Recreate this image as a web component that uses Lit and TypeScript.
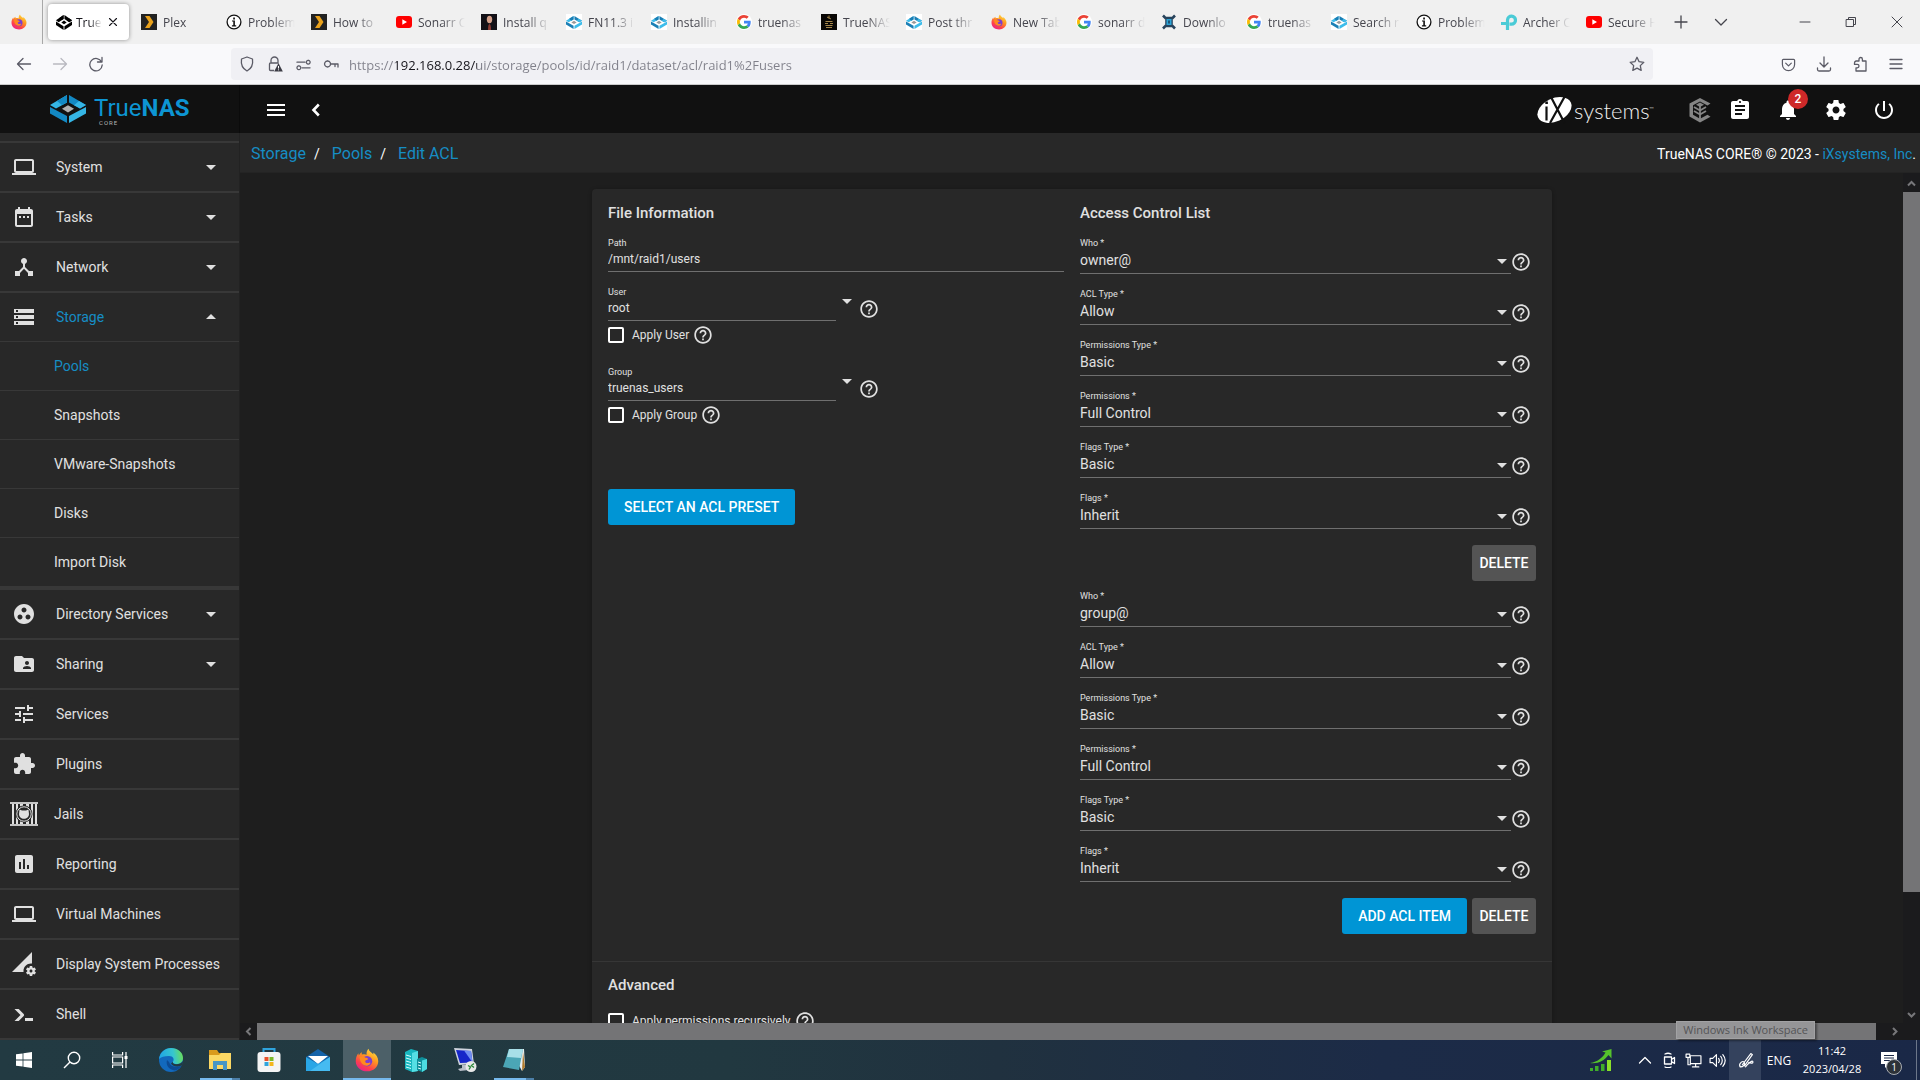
import { LitElement, html, svg, css, nothing, type TemplateResult } from "lit";
import { customElement } from "lit/decorators.js";
import { classMap } from "lit/directives/class-map.js";

type Art = TemplateResult;

const glyph = (d: string, size = 24, box = "0 0 24 24"): Art => html`<svg class="glyph" width=${size} height=${size} viewBox=${box} aria-hidden="true"><path fill="currentColor" fill-rule="evenodd" d=${d}></path></svg>`;
const line = (d: string, size = 16, weight = 1.3): Art => html`<svg class="glyph" width=${size} height=${size} viewBox="0 0 16 16" fill="none" stroke="currentColor" stroke-width=${weight} stroke-linecap="round" stroke-linejoin="round" aria-hidden="true"><path d=${d}></path></svg>`;

const P = {
  computer: "M20 18c1.1 0 1.99-.9 1.99-2L22 6c0-1.1-.9-2-2-2H4c-1.1 0-2 .9-2 2v10c0 1.1.9 2 2 2H0v2h24v-2h-4zM4 6h16v10H4V6z",
  calendar: "M9 11H7v2h2v-2zm4 0h-2v2h2v-2zm4 0h-2v2h2v-2zm2-7h-1V2h-2v2H8V2H6v2H5c-1.11 0-1.99.9-1.99 2L3 20c0 1.1.89 2 2 2h14c1.1 0 2-.9 2-2V6c0-1.1-.9-2-2-2zm0 16H5V9h14v11z",
  hub: "M17 16l-4-4V8.82C14.16 8.4 15 7.3 15 6c0-1.66-1.34-3-3-3S9 4.34 9 6c0 1.3.84 2.4 2 2.82V12l-4 4H3v5h5v-3.05l4-4.2 4 4.2V21h5v-5h-4z",
  storage: "M2 20h20v-4H2v4zm2-3h2v2H4v-2zM2 4v4h20V4H2zm4 3H4V5h2v2zm-4 7h20v-4H2v4zm2-3h2v2H4v-2z",
  groupWork: "M12 2C6.48 2 2 6.48 2 12s4.48 10 10 10 10-4.48 10-10S17.52 2 12 2zM8 17.5c-1.38 0-2.5-1.12-2.5-2.5s1.12-2.5 2.5-2.5 2.5 1.12 2.5 2.5-1.12 2.5-2.5 2.5zM9.5 8c0-1.38 1.12-2.5 2.5-2.5s2.5 1.12 2.5 2.5-1.12 2.5-2.5 2.5S9.5 9.38 9.5 8zm6.5 9.5c-1.38 0-2.5-1.12-2.5-2.5s1.12-2.5 2.5-2.5 2.5 1.12 2.5 2.5-1.12 2.5-2.5 2.5z",
  folderShared: "M20 6h-8l-2-2H4c-1.1 0-1.99.9-1.99 2L2 18c0 1.1.9 2 2 2h16c1.1 0 2-.9 2-2V8c0-1.1-.9-2-2-2zm-5 3c1.1 0 2 .9 2 2s-.9 2-2 2-2-.9-2-2 .9-2 2-2zm4 8h-8v-1c0-1.33 2.67-2 4-2s4 .67 4 2v1z",
  tune: "M3 17v2h6v-2H3zM3 5v2h10V5H3zm10 16v-2h8v-2h-8v-2h-2v6h2zM7 9v2H3v2h4v2h2V9H7zm14 4v-2H11v2h10zm-6-4h2V7h4V5h-4V3h-2v6z",
  plugin: "M20.5 11H19V7c0-1.1-.9-2-2-2h-4V3.5C13 2.12 11.88 1 10.5 1S8 2.12 8 3.5V5H4c-1.1 0-1.99.9-1.99 2v3.8H3.5c1.49 0 2.7 1.21 2.7 2.7s-1.21 2.7-2.7 2.7H2V20c0 1.1.9 2 2 2h3.8v-1.5c0-1.49 1.21-2.7 2.7-2.7 1.49 0 2.7 1.21 2.7 2.7V22H17c1.1 0 2-.9 2-2v-4h1.5c1.38 0 2.5-1.12 2.5-2.5S21.88 11 20.5 11z",
  report: "M19 3H5c-1.1 0-2 .9-2 2v14c0 1.1.9 2 2 2h14c1.1 0 2-.9 2-2V5c0-1.1-.9-2-2-2zM9 17H7v-7h2v7zm4 0h-2V7h2v10zm4 0h-2v-4h2v4z",
  process: "M18.99 11.5c.34 0 .67.03 1 .07L20 0 0 20h11.56c-.04-.33-.07-.66-.07-1 0-4.14 3.36-7.5 7.5-7.5zm3.71 7.99c.02-.16.04-.32.04-.49 0-.17-.01-.33-.04-.49l1.06-.83c.09-.08.12-.21.06-.32l-1-1.73c-.06-.11-.19-.15-.31-.11l-1.24.5c-.26-.2-.54-.37-.85-.49l-.19-1.32c-.01-.12-.12-.21-.24-.21h-2c-.12 0-.23.09-.25.21l-.19 1.32c-.3.13-.59.29-.85.49l-1.24-.5c-.11-.04-.24 0-.31.11l-1 1.73c-.06.11-.04.24.06.32l1.06.83c-.02.16-.03.32-.03.49 0 .17.01.33.03.49l-1.06.83c-.09.08-.12.21-.06.32l1 1.73c.06.11.19.15.31.11l1.24-.5c.26.2.54.37.85.49l.19 1.32c.02.12.12.21.25.21h2c.12 0 .23-.09.25-.21l.19-1.32c.3-.13.59-.29.84-.49l1.25.5c.11.04.24 0 .31-.11l1-1.73c.06-.11.03-.24-.06-.32l-1.07-.83zm-3.71 1.01c-.83 0-1.5-.67-1.5-1.5s.67-1.5 1.5-1.5 1.5.67 1.5 1.5-.67 1.5-1.5 1.5z",
  shell: "M13 19v-3h8v3h-8M8.500 13 2.470 7h4.240l4.960 4.950c.58.59.58 1.550 0 2.120L6.740 19H2.500l6-6z",
  help: "M11 18h2v-2h-2v2zm1-16C6.48 2 2 6.48 2 12s4.48 10 10 10 10-4.48 10-10S17.52 2 12 2zm0 18c-4.41 0-8-3.59-8-8s3.59-8 8-8 8 3.59 8 8-3.59 8-8 8zm0-14c-2.21 0-4 1.79-4 4h2c0-1.1.9-2 2-2s2 .9 2 2c0 2-3 1.75-3 5h2c0-2.25 3-2.5 3-5 0-2.21-1.79-4-4-4z",
  menu: "M3 18h18v-2H3v2zm0-5h18v-2H3v2zm0-7v2h18V6H3z",
  clipboard: "M19 3h-4.18C14.4 1.84 13.3 1 12 1c-1.3 0-2.4.84-2.82 2H5c-1.1 0-2 .9-2 2v14c0 1.1.9 2 2 2h14c1.1 0 2-.9 2-2V5c0-1.1-.9-2-2-2zm-7 0c.55 0 1 .45 1 1s-.45 1-1 1-1-.45-1-1 .45-1 1-1zm2 14H7v-2h7v2zm3-4H7v-2h10v2zm0-4H7V7h10v2z",
  bell: "M12 22c1.1 0 2-.9 2-2h-4c0 1.1.89 2 2 2zm6-6v-5c0-3.07-1.64-5.64-4.5-6.32V4c0-.83-.67-1.5-1.5-1.5s-1.5.67-1.5 1.5v.68C7.63 5.36 6 7.92 6 11v5l-2 2v1h16v-1l-2-2z",
  gear: "M19.43 12.98c.04-.32.07-.64.07-.98s-.03-.66-.07-.98l2.11-1.65c.19-.15.24-.42.12-.64l-2-3.46c-.12-.22-.39-.3-.61-.22l-2.49 1c-.52-.4-1.08-.73-1.69-.98l-.38-2.65C14.46 2.18 14.25 2 14 2h-4c-.25 0-.46.18-.49.42l-.38 2.65c-.61.25-1.17.59-1.69.98l-2.49-1c-.23-.09-.49 0-.61.22l-2 3.46c-.13.22-.07.49.12.64l2.11 1.65c-.04.32-.07.65-.07.98s.03.66.07.98l-2.11 1.65c-.19.15-.24.42-.12.64l2 3.46c.12.22.39.3.61.22l2.49-1c.52.4 1.08.73 1.69.98l.38 2.65c.03.24.24.42.49.42h4c.25 0 .46-.18.49-.42l.38-2.65c.61-.25 1.17-.59 1.69-.98l2.49 1c.23.09.49 0 .61-.22l2-3.46c.12-.22.07-.49-.12-.64l-2.11-1.65zM12 15.5c-1.93 0-3.5-1.57-3.5-3.5s1.57-3.5 3.5-3.5 3.5 1.57 3.5 3.5-1.57 3.5-3.5 3.5z",
  power: "M13 3h-2v10h2V3zm4.83 2.17l-1.42 1.42C17.99 7.86 19 9.81 19 12c0 3.87-3.13 7-7 7s-7-3.13-7-7c0-2.19 1.01-4.14 2.58-5.42L6.17 5.17C4.23 6.82 3 9.26 3 12c0 4.97 4.03 9 9 9s9-4.03 9-9c0-2.74-1.23-5.18-3.17-6.83z",
  down: "M7 10l5 5 5-5z",
  up: "M7 14l5-5 5 5z",
};

const jail = html`<svg class="glyph" width="28" height="24" viewBox="0 0 28 24" aria-hidden="true">
  <g fill="currentColor"><path d="M0 0h28v2H0zM0 22h28v2H0z" opacity=".85"></path><path d="M2 2h2v20H2zM6 2h2v20H6zM10 2h3v20h-3zM16 2h3v20h-3zM21 2h2v20h-2zM25 2h2v20h-2z"></path></g>
  <circle cx="14" cy="12" r="8.500" fill="#282828"></circle><circle cx="14" cy="12" r="7.200" fill="none" stroke="currentColor" stroke-width="1"></circle>
  <path fill="currentColor" d="M9.500 7.500l2.500 1h4l2.500-1 .5 4.500c0 2.900-2.200 4.800-5 4.800s-5-1.900-5-4.800z"></path>
</svg>`;

const nasMark = (w: number, h: number, light: string, dark: string, core: string): Art => html`<svg class="glyph" width=${w} height=${h} viewBox="0 0 36 28" preserveAspectRatio="none" aria-hidden="true">
  <path fill=${light} d="M17 0v7.500L6 13.500 0 10z"></path><path fill=${dark} d="M17 0v7.500L12 10 7 6z"></path>
  <path fill=${dark} d="M19 0l17 10-6 3.500-11-6z"></path><path fill=${light} d="M29 6l7 4-6 3.500-6-3.300z"></path>
  <path fill=${dark} d="M0 12l17 9v7L0 18.500z"></path><path fill=${light} d="M36 12l-17 9v7l17-9.500z"></path>
  <path fill=${core} d="M18 10.200l6 3.600-6 3.600-6-3.600z"></path>
</svg>`;

const firefox = (s: number): Art => html`<svg class="glyph" width=${s} height=${s} viewBox="0 0 32 32" aria-hidden="true">
  <defs><linearGradient id="fx" x1=".85" y1="0" x2=".25" y2="1"><stop offset="0" stop-color="#ffe94a"></stop><stop offset=".4" stop-color="#ff9a1f"></stop><stop offset=".75" stop-color="#ff3f4c"></stop><stop offset="1" stop-color="#e5208f"></stop></linearGradient></defs>
  <path fill="url(#fx)" d="M18 1c.5 3.500 4 4.500 6.500 7.500 0-1 0-1.500-.5-2.500C28 8.500 31 12.500 31 17.500 31 25 24.500 31 16.200 31 8 31 1 25.500 1 17.500 1 13.500 2 10 4.500 7l.5 3c1.500-2.500 2.500-3.500 4-4.500v3c3-.5 5-.5 6.500.5-.5-3 .5-6 2.500-8z"></path>
  <circle cx="16" cy="17.500" r="7" fill="#7b3fd0"></circle>
  <path fill="#ff8a1f" d="M6 12c4-2 6-.5 8 1 2 0 3 .5 3.500 1.500-1 1.500-3.500 1.200-4 3 .3 2.500 3 3.200 5.500 2 1-.4 2 .4 1.200 1.400-2 2.600-5 3.400-8 2.100C8.500 21.500 6.500 17 6 12z"></path>
</svg>`;
const plex = html`<svg class="glyph" width="16" height="16" viewBox="0 0 16 16" aria-hidden="true"><path fill="#222" d="M0 0h16v16H0z"></path><path fill="#e9a11b" d="M4 2h4.500l4 6-4 6H4l4-6z"></path></svg>`;
const info = html`<svg class="glyph" width="16" height="16" viewBox="0 0 16 16" aria-hidden="true"><circle cx="8" cy="8" r="6.900" fill="#fff" stroke="#111" stroke-width="1.300"></circle><path fill="#111" d="M7.200 3.600h1.700v1.800H7.200zM6 6.500h2.900v4.800h1.300v1.100H5.900v-1.100h1.400V7.600H6z"></path></svg>`;
const youtube = html`<svg class="glyph" width="16" height="16" viewBox="0 0 16 16" aria-hidden="true"><rect y="2" width="16" height="12" rx="3" fill="#f00"></rect><path fill="#fff" d="M6.300 5.200v5.600L11 8z"></path></svg>`;
const person = html`<svg class="glyph" width="16" height="16" viewBox="0 0 16 16" aria-hidden="true"><path fill="#121016" d="M0 0h16v16H0z"></path><ellipse cx="8.500" cy="5.500" rx="2.700" ry="3.700" fill="#d3a08a"></ellipse><path fill="#8c3b34" d="M7 16c0-4 .5-6 1.500-6s1.500 2 1.500 6z"></path></svg>`;
const google = html`<svg class="glyph" width="16" height="16" viewBox="0 0 48 48" aria-hidden="true"><circle cx="24" cy="24" r="24" fill="#fff"></circle><g transform="translate(3 3) scale(.875)"><path fill="#EA4335" d="M24 9.500c3.540 0 6.710 1.220 9.210 3.600l6.850-6.850C35.900 2.380 30.470 0 24 0 14.620 0 6.510 5.380 2.560 13.220l7.980 6.190C12.430 13.720 17.740 9.500 24 9.500z"></path><path fill="#4285F4" d="M46.980 24.550c0-1.570-.15-3.090-.38-4.550H24v9.020h12.940c-.58 2.960-2.260 5.480-4.780 7.180l7.730 6c4.510-4.180 7.090-10.360 7.090-17.650z"></path><path fill="#FBBC05" d="M10.530 28.590c-.48-1.450-.76-2.990-.76-4.590s.27-3.140.76-4.590l-7.980-6.190C.92 16.460 0 20.120 0 24s.92 7.540 2.560 10.780z"></path><path fill="#34A853" d="M24 48c6.480 0 11.930-2.130 15.890-5.810l-7.730-6c-2.150 1.450-4.920 2.300-8.160 2.300-6.260 0-11.570-4.220-13.470-9.910l-7.980 6.190C6.510 42.620 14.620 48 24 48z"></path></g></svg>`;
const stamp = html`<svg class="glyph" width="16" height="16" viewBox="0 0 16 16" aria-hidden="true"><path fill="#080604" d="M0 0h16v16H0z"></path><path stroke="#a5864a" fill="none" d="M8 1.500v3M6 3l4 2M4.500 7.500h7M4 9.500h3M9 9.500h3M4.500 11.500h7M5 13.500h6"></path></svg>`;
const downloadSite = html`<svg class="glyph" width="16" height="16" viewBox="0 0 16 16" aria-hidden="true"><path fill="none" stroke="#27435c" stroke-width="2.600" d="M2 1.500L5.500 5v6L2 14.500M14 1.500L10.500 5v6l3.500 3.500M5 4h6M5 12h6"></path><path fill="#2aa3d6" d="M5.500 5h5v6h-5z"></path><path fill="#173049" d="M7.300 6.500h1.400v3H7.300z"></path></svg>`;
const tplink = html`<svg class="glyph" width="16" height="16" viewBox="0 0 16 16" aria-hidden="true"><path fill="none" stroke="#4acbd6" stroke-width="3.200" d="M0 9.500h5.500M6.500 16V6a4 4 0 1 1 4 4.200H8.500"></path></svg>`;
const blueMark = html`<span class="mark-tile">${nasMark(16, 13, "#3dbcea", "#1b7fb5", "#9a9a9a")}</span>`;
const blackMark = nasMark(16, 15, "#000", "#000", "#000");

const TABS: { art: Art; text: string; active?: boolean }[] = [
  { art: blackMark, text: "TrueN", active: true },
  { art: plex, text: "Plex" },
  { art: info, text: "Problem" },
  { art: plex, text: "How to" },
  { art: youtube, text: "Sonarr C" },
  { art: person, text: "Install q" },
  { art: blueMark, text: "FN11.3 i" },
  { art: blueMark, text: "Installin" },
  { art: google, text: "truenas" },
  { art: stamp, text: "TrueNAS" },
  { art: blueMark, text: "Post thr" },
  { art: firefox(16), text: "New Tab" },
  { art: google, text: "sonarr d" },
  { art: downloadSite, text: "Downlo" },
  { art: google, text: "truenas" },
  { art: blueMark, text: "Search r" },
  { art: info, text: "Problem" },
  { art: tplink, text: "Archer C" },
  { art: youtube, text: "Secure H" },
];

interface NavItem { text: string; art: Art; expand?: boolean; open?: boolean; tight?: boolean; children?: string[] }
const NAV: NavItem[] = [
  { text: "System", art: glyph(P.computer), expand: true },
  { text: "Tasks", art: glyph(P.calendar), expand: true },
  { text: "Network", art: glyph(P.hub), expand: true },
  { text: "Storage", art: glyph(P.storage), expand: true, open: true, children: ["Pools", "Snapshots", "VMware-Snapshots", "Disks", "Import Disk"] },
  { text: "Directory Services", art: glyph(P.groupWork), expand: true },
  { text: "Sharing", art: glyph(P.folderShared), expand: true },
  { text: "Services", art: glyph(P.tune) },
  { text: "Plugins", art: glyph(P.plugin) },
  { text: "Jails", art: jail, tight: true },
  { text: "Reporting", art: glyph(P.report) },
  { text: "Virtual Machines", art: glyph(P.computer) },
  { text: "Display System Processes", art: glyph(P.process) },
  { text: "Shell", art: glyph(P.shell) },
];

const ACL_ITEMS: [string, string][][] = ["owner@", "group@"].map((who) => [
  ["Who", who], ["ACL Type", "Allow"], ["Permissions Type", "Basic"],
  ["Permissions", "Full Control"], ["Flags Type", "Basic"], ["Flags", "Inherit"],
]);

const base = css`
  :host { box-sizing: border-box; }
  *, *::before, *::after { box-sizing: border-box; }
  button { font: inherit; color: inherit; background: none; border: 0; padding: 0; display: flex; align-items: center; justify-content: center; cursor: pointer; }
  a { color: inherit; text-decoration: none; }
  ul { list-style: none; margin: 0; padding: 0; }
  .glyph { display: block; flex: none; }
`;

@customElement("browser-chrome")
class BrowserChrome extends LitElement {
  static styles = [base, css`
    :host { display: block; font-family: "Open Sans", "Noto Sans", sans-serif; font-size: 12px; color: #45454d; border-bottom: 1px solid #cccccc; }
    .tabs { display: flex; align-items: center; height: 44px; background: #f0f0f0; }
    .pinned { width: 43px; height: 44px; padding-right: 4px; border-right: 1px solid #a8a8a8; margin-right: 3px; }
    .tab { flex: 0 1 85px; min-width: 0; height: 44px; padding: 4px 2px; }
    .face { width: 100%; height: 36px; padding: 0 4px 0 8px; gap: 6px; border-radius: 4px; justify-content: flex-start; display: flex; align-items: center; }
    .active .face { background: #fff; box-shadow: 0 0 4px rgba(0, 0, 0, 0.4); color: #15141a; gap: 4px; padding-right: 9px; }
    .caption { flex: 1; min-width: 0; text-align: left; overflow: hidden; white-space: nowrap; -webkit-mask-image: linear-gradient(90deg, #000 50%, transparent); mask-image: linear-gradient(90deg, #000 50%, transparent); }
    .mark-tile { display: flex; align-items: center; width: 16px; height: 16px; background: #fff; flex: none; }
    .extra { width: 40px; height: 36px; }
    .spacer { flex: 1; }
    .win { width: 46px; height: 44px; }
    .bar { display: flex; align-items: center; height: 40px; padding: 0 6px; background: #f9f9fb; color: #5b5b66; }
    .tool { width: 36px; height: 32px; }
    .dim { color: #b9b9c0; }
    .url { flex: 1; display: flex; align-items: center; height: 32px; margin: 0 117px; padding: 0 8px 0 2px; border-radius: 4px; background: #f0f0f4; }
    .url button { width: 28px; height: 28px; }
    .url .star { width: 16px; }
    .address { flex: 1; min-width: 0; height: 30px; border: 0; outline: 0; padding: 2px 0 0 4px; font: inherit; font-size: 13px; color: transparent; background: linear-gradient(90deg, #80808a 51px, #15141a 51px, #15141a 132px, #80808a 132px); background-clip: text; -webkit-background-clip: text; }
  `];
  render() {
    return html`
      <div class="tabs">
        <button class="pinned" aria-label="Firefox View">${firefox(16)}</button>
        ${TABS.map((t) => html`<div class=${classMap({ tab: true, active: !!t.active })}><button class="face">
          ${t.art}<span class="caption">${t.text}</span>${t.active ? line("M4 4l8 8M12 4l-8 8", 14) : nothing}</button></div>`)}
        <button class="extra" aria-label="New tab">${line("M8 2v12M2 8h12")}</button>
        <button class="extra" aria-label="List tabs">${line("M2.500 5.500L8 11l5.500-5.500")}</button>
        <span class="spacer"></span>
        <button class="win" aria-label="Minimise">${line("M3 8h10", 16, 1)}</button>
        <button class="win" aria-label="Restore">${line("M3.500 5.500h7v7h-7zM5.500 5.500v-2h7v7h-2", 16, 1)}</button>
        <button class="win" aria-label="Close">${line("M3 3l10 10M13 3L3 13", 16, 1)}</button>
      </div>
      <div class="bar">
        <button class="tool" aria-label="Back">${line("M14.500 8H2M7 2.500L1.500 8 7 13.500")}</button>
        <button class="tool dim" aria-label="Forward">${line("M1.500 8H14M9 2.500L14.500 8 9 13.500")}</button>
        <button class="tool" aria-label="Reload">${line("M13.600 6A6.200 6.200 0 1 0 14.200 9M14 1.500V6H9.500")}</button>
        <div class="url">
          <button aria-label="Tracking protection">${line("M8 1l5.500 2c.7 5-.8 9.500-5.500 12C3.300 12.500 1.800 8 2.500 3z")}</button>
          <button aria-label="Connection not secure"><svg class="glyph" width="16" height="16" viewBox="0 0 16 16" aria-hidden="true"><path fill="none" stroke="currentColor" stroke-width="1.300" d="M4 7V4.500a3.500 3.500 0 0 1 7 0V7M7 14.500H3.500a1 1 0 0 1-1-1v-5.500a1 1 0 0 1 1-1h8"></path><path fill="#3c3c45" d="M11.500 7l4.300 8.500H7.200z"></path><path stroke="#fff" d="M11.500 10v2.500M11.500 13.400v.9"></path></svg></button>
          <button aria-label="Permissions">${line("M1 5.500h8.500M13 3.500a2 2 0 1 0 .1 0M6.500 11.500H15M3 9.500a2 2 0 1 0 .1 0", 15)}</button>
          <button aria-label="Saved login">${line("M4.500 5a3 3 0 1 0 .1 0M7.500 8H15v3M12 8v2.500")}</button>
          <input class="address" aria-label="Address" value="https://192.168.0.28/ui/storage/pools/id/raid1/dataset/acl/raid1%2Fusers">
          <button class="star" aria-label="Bookmark">${line("M8 1.300l2.100 4.400 4.700.6-3.500 3.300.9 4.800L8 12.100l-4.200 2.300.9-4.800L1.200 6.300l4.700-.6z")}</button>
        </div>
        <button class="tool" aria-label="Pocket">${line("M2.500 2.500h11a1 1 0 0 1 1 1V8a6.500 6.500 0 0 1-13 0V3.500a1 1 0 0 1 1-1zM5 6.500l3 3 3-3", 15)}</button>
        <button class="tool" aria-label="Downloads">${line("M8 1v9.500M4 7l4 4 4-4M1.500 12v1.500a1.500 1.500 0 0 0 1.500 1.500h10a1.500 1.500 0 0 0 1.500-1.500V12")}</button>
        <button class="tool" aria-label="Extensions">${line("M4 5h3V3.200a1.700 1.700 0 0 1 3.400 0V5H14v10H4v-3.200h1.300a1.700 1.700 0 0 0 0-3.400H2.500V7A2 2 0 0 1 4 5z")}</button>
        <button class="tool" aria-label="Application menu">${line("M2 3.500h12M2 8h12M2 12.500h12")}</button>
      </div>`;
  }
}

@customElement("nas-header")
class NasHeader extends LitElement {
  static styles = [base, css`
    :host { display: flex; height: 48px; background: #111111; color: #fff; font-family: Roboto, sans-serif; }
    .brand { display: flex; align-items: center; gap: 8px; width: 240px; padding-left: 50px; border-right: 1px solid #0b0b0b; }
    .name { display: flex; flex-direction: column; color: #0d95d3; font-size: 24px; line-height: 24px; padding-top: 4px; }
    .name b { font-weight: 700; }
    .name small { font-size: 6px; line-height: 8px; color: #b5b5b5; padding-left: 5px; letter-spacing: 1px; margin-top: -1px; }
    .left { display: flex; align-items: center; padding: 2px 0 0 16px; }
    .left button { width: 40px; height: 40px; }
    .right { display: flex; align-items: center; margin-left: auto; padding: 2px 12px 0 0; }
    .ix { display: flex; align-items: center; gap: 2px; font-family: Lato, sans-serif; font-weight: 300; font-size: 22px; color: #eee; margin-right: 30px; }
    .ix sup { font-size: 6px; }
    .right button { width: 48px; height: 46px; position: relative; }
    .right .command { width: 32px; }
    .badge { position: absolute; top: 2px; left: 24px; width: 20px; height: 20px; border-radius: 50%; background: #ce2929; font-size: 12px; font-weight: 500; line-height: 20px; text-align: center; }
  `];
  render() {
    return html`
      <a class="brand" href="#dashboard">${nasMark(36, 28, "#35b6e6", "#1389c4", "#b0b0b0")}<span class="name"><span>True<b>NAS</b></span><small>CORE</small></span></a>
      <div class="left">
        <button aria-label="Toggle menu">${glyph(P.menu)}</button>
        <button aria-label="Collapse menu"><svg class="glyph" width="24" height="24" viewBox="0 0 24 24" aria-hidden="true"><path fill="none" stroke="#fff" stroke-width="2.600" d="M14.800 6.500L9.500 12l5.300 5.500"></path></svg></button>
      </div>
      <div class="right">
        <a class="ix" href="#ixsystems"><svg class="glyph" width="35" height="28" viewBox="0 0 35 28" role="img" aria-label="iX">
          <ellipse cx="17.500" cy="14" rx="18" ry="11.500" transform="rotate(-25 17.500 14)" fill="#fff"></ellipse>
          <path stroke="#111" stroke-width="2.200" fill="none" d="M9.500 10.500v14M14 1l13.500 26M28 0L13 27"></path><path fill="#111" d="M8.300 5.500h2.600V8H8.300z"></path></svg>
          <span>systems<sup>™</sup></span></a>
        <button class="command" aria-label="TrueCommand"><svg class="glyph" width="24" height="26" viewBox="0 0 24 26" aria-hidden="true">
          <path fill="#858585" d="M12 1l10.500 5.500-3 2L12 4.500 5 8.200v9.600l7 4 7.500-4 3 2L12 25.500 1.500 19.500v-13z"></path>
          <path fill="none" stroke="#858585" stroke-width="1.800" d="M12 8v14M6 10l6 3.500L18 10M6 14l6 3.500 6-3.500"></path><path fill="#858585" d="M12 5.500l4 2.300-4 2.300-4-2.300z"></path></svg></button>
        <button aria-label="Task manager">${glyph(P.clipboard)}</button>
        <button aria-label="Alerts">${glyph(P.bell)}<span class="badge">2</span></button>
        <button aria-label="Settings">${glyph(P.gear)}</button>
        <button aria-label="Power">${glyph(P.power)}</button>
      </div>`;
  }
}

@customElement("nas-sidebar")
class NasSidebar extends LitElement {
  static styles = [base, css`
    :host { display: block; width: 240px; flex: none; background: #282828; color: #e0e0e0; font-family: Roboto, sans-serif; font-size: 14px; padding-top: 8px; overflow: hidden; border-right: 1px solid #222222; }
    .list { border-top: 2px solid #383838; }
    .item { border-bottom: 2px solid #383838; }
    .row { display: flex; align-items: center; height: 48px; padding: 0 16px 0 12px; gap: 20px; }
    .tight { padding-left: 10px; gap: 16px; }
    .row .text { flex: 1; white-space: nowrap; }
    .open .row .text, .here { color: #168dc4; }
    .sub { border-bottom: 2px solid #383838; }
    .sub a { display: flex; align-items: center; height: 49px; padding-left: 54px; border-top: 1px solid #383838; }
  `];
  render() {
    return html`<nav><ul class="list">${NAV.map((n) => html`<li class=${classMap({ item: true, open: !!n.open })}>
      <a href="#nav" class=${classMap({ row: true, tight: !!n.tight })}>${n.art}<span class="text">${n.text}</span>${n.expand ? glyph(n.open ? P.up : P.down) : nothing}</a>
      ${n.children ? html`<ul class="sub">${n.children.map((c, i) => html`<li><a href="#nav" class=${classMap({ here: i === 0 })}>${c}</a></li>`)}</ul>` : nothing}
    </li>`)}</ul></nav>`;
  }
}

@customElement("acl-form")
class AclForm extends LitElement {
  static styles = [base, css`
    :host { display: block; max-width: 960px; margin: 0 auto; background: #282828; color: #e0e0e0; border-radius: 4px; box-shadow: 0 1px 4px rgba(0, 0, 0, 0.3); font-family: Roboto, sans-serif; }
    .columns { display: grid; grid-template-columns: 1fr 1fr; padding-bottom: 27px; border-bottom: 1px solid #363636; }
    .section { padding: 12px 8px 0 16px; }
    .section + .section { padding: 12px 16px 0 8px; }
    h2 { margin: 0 0 12px; font-size: 15px; line-height: 24px; font-weight: 500; }
    .section + .section { padding-right: 16px; }
    .field { display: flex; align-items: flex-end; margin-bottom: 14px; }
    .control { flex: 1; min-width: 0; display: flex; flex-direction: column; border-bottom: 1px solid #6f6f6f; position: relative; }
    label.small { font-size: 9px; line-height: 12px; }
    .control input, .control select { width: 100%; border: 0; outline: 0; margin: 0; padding: 0 0 2px; background: none; color: inherit; font-family: inherit; appearance: none; border-radius: 0; }
    .control input { height: 22px; font-size: 12px; padding-bottom: 3px; }
    .control select { height: 24px; font-size: 14px; }
    .control .glyph { position: absolute; right: -3px; bottom: 0; pointer-events: none; }
    .help { width: 20px; height: 20px; margin-bottom: 2px; flex: none; }
    .acl .field { padding-right: 5px; }
    .combo { margin-bottom: 4px; }
    .combo .control { flex: 0 0 50%; }
    .drop { width: 22px; height: 30px; margin-right: 1px; align-self: flex-start; }
    .check { display: flex; align-items: center; height: 20px; font-size: 12px; gap: 8px; }
    .check input { appearance: none; width: 16px; height: 16px; margin: 0; border: 2px solid #fff; border-radius: 2px; }
    .check label { margin-right: -4px; }
    .check .help { margin: 0; }
    .check + .combo { margin-top: 21px; }
    .solid { height: 36px; padding: 0 16px; border-radius: 3px; font-size: 14px; font-weight: 500; background: #0095d5; color: #fff; white-space: nowrap; }
    .gray { width: 64px; padding: 0; background: #545454; }
    .preset { margin-top: 64px; }
    .actions { display: flex; justify-content: flex-end; gap: 5px; padding-top: 2px; margin-bottom: 9px; }
    .acl:last-child .actions { margin-bottom: 0; }
    .advanced { padding: 11px 16px 200px; }
    .advanced h2 { margin-bottom: 14px; }
  `];
  private help() {
    return html`<button class="help" type="button" aria-label="Help">${glyph(P.help, 20, "0.5 0.5 23 23")}</button>`;
  }
  private check(id: string, text: string) {
    return html`<div class="check"><input type="checkbox" id=${id}><label for=${id}>${text}</label>${this.help()}</div>`;
  }
  private combo(id: string, text: string, value: string) {
    return html`<div class="field combo"><div class="control"><label class="small" for=${id}>${text}</label><input id=${id} .value=${value}></div>
      <button class="drop" type="button" aria-label=${`Show ${text} options`}>${glyph(P.down)}</button>${this.help()}</div>`;
  }
  render() {
    return html`<form>
      <div class="columns">
        <section class="section">
          <h2>File Information</h2>
          <div class="field"><div class="control"><label class="small" for="path">Path</label><input id="path" .value=${"/mnt/raid1/users"}></div></div>
          ${this.combo("user", "User", "root")}
          ${this.check("apply-user", "Apply User")}
          ${this.combo("group", "Group", "truenas_users")}
          ${this.check("apply-group", "Apply Group")}
          <button class="solid preset" type="button">SELECT AN ACL PRESET</button>
        </section>
        <section class="section">
          <h2>Access Control List</h2>
          ${ACL_ITEMS.map((fields, g) => html`<div class="acl">
            ${fields.map(([name, value], i) => html`<div class="field"><div class="control"><label class="small" for=${`f${g}-${i}`}>${name} *</label>
              <select id=${`f${g}-${i}`}><option>${value}</option></select>${glyph(P.down)}</div>${this.help()}</div>`)}
            <div class="actions">${g === ACL_ITEMS.length - 1 ? html`<button class="solid" type="button">ADD ACL ITEM</button>` : nothing}<button class="solid gray" type="button">DELETE</button></div>
          </div>`)}
        </section>
      </div>
      <section class="advanced"><h2>Advanced</h2>${this.check("recursive", "Apply permissions recursively")}</section>
    </form>`;
  }
}

const ICON = {
  windows: html`<svg class="glyph" width="16" height="16" viewBox="0 0 16 16" aria-hidden="true"><path fill="#fff" d="M0 2.300l6.600-.9v6.200H0zM7.400 1.300L16 0v7.600H7.400zM0 8.400h6.600v6.200L0 13.700zM7.400 8.400H16V16l-8.600-1.300z"></path></svg>`,
  search: html`<svg class="glyph" width="18" height="18" viewBox="0 0 18 18" aria-hidden="true"><circle cx="11" cy="7" r="5.700" fill="none" stroke="#fff" stroke-width="1.400"></circle><path stroke="#fff" stroke-width="1.400" d="M7 11l-6 6"></path></svg>`,
  view: html`<svg class="glyph" width="16" height="16" viewBox="0 0 16 16" aria-hidden="true"><path fill="none" stroke="#fff" stroke-width="1.200" d="M.6 0v3h10V0M.6 16v-3h10v3M.6 5h10v6H.6zM14 0v16"></path><path fill="#fff" d="M12.500 4h3v3h-3z"></path></svg>`,
  edge: html`<svg class="glyph" width="24" height="24" viewBox="0 0 24 24" aria-hidden="true"><defs><linearGradient id="eg" x1="0" y1=".5" x2="1" y2=".4"><stop offset="0" stop-color="#1fa5e6"></stop><stop offset=".6" stop-color="#36c6cf"></stop><stop offset="1" stop-color="#6ade58"></stop></linearGradient></defs>
    <circle cx="12" cy="12" r="12" fill="#1269bd"></circle><path fill="url(#eg)" d="M0 11C1 4 6 0 12 0c7 0 12 4.500 12 10 0 4-3 6-6.500 6-3 0-4.500-1-3.500-2.500 1.500-2 .5-5.500-4-5.500C5.500 8 1.500 9 0 11z"></path><path fill="#0c4b94" d="M8 12c-1.500 5 2 10 8 10.500 3-.8 5-2.500 6.500-5-5 2.500-11 1.500-12.500-3.500z"></path><path fill="#223a42" d="M12 15.500c2 3 7 4 11.500 1.500l.5-4c-1.500 2.500-4 3.200-6.500 3.200-3 0-4-1-3.500-2.500z"></path></svg>`,
  folder: html`<svg class="glyph" width="24" height="22" viewBox="0 0 24 22" aria-hidden="true"><path fill="#d99a1c" d="M1 1h8l2 3h12v5H1z"></path><path fill="#fbd864" d="M1 6h10l2-2h10v16H1z"></path><path fill="#4796c4" d="M5 21v-9h14v9h-4v-5H9v5z"></path></svg>`,
  store: html`<svg class="glyph" width="24" height="26" viewBox="0 0 24 26" aria-hidden="true"><path fill="none" stroke="#2fa4dd" stroke-width="2" d="M6.500 7V2h11v5"></path><rect y="5" x=".5" width="23" height="20" rx="3" fill="#f4f4f4"></rect><path fill="#e8532c" d="M7.500 10h4v4h-4z"></path><path fill="#7cb928" d="M12.500 10h4v4h-4z"></path><path fill="#2fa4dd" d="M7.500 15h4v4h-4z"></path><path fill="#f4b61c" d="M12.500 15h4v4h-4z"></path></svg>`,
  mail: html`<svg class="glyph" width="24" height="24" viewBox="0 0 24 24" aria-hidden="true"><path fill="#1463a9" d="M0 9l12-8 12 8-12 8z"></path><path fill="#fff" d="M2 8h20l-10 8z"></path><path fill="#29a6e6" d="M0 9l12 7 12-7v14H0z"></path><path fill="#53c4f5" d="M24 9L4 23h20z" opacity=".7"></path></svg>`,
  server: html`<svg class="glyph" width="24" height="24" viewBox="0 0 24 24" aria-hidden="true"><path fill="#18b6bf" d="M1 4l6-3 7 2v20l-6 1-7-3z"></path><path fill="#55dfe4" d="M8 5l6-2v20l-6 1z"></path><path fill="#0f8f9a" d="M13 11l5-2 5 2v10l-5 3-5-2z"></path><path fill="#4cdbe0" d="M18 12.500l5-1.500v10l-5 3z"></path><path stroke="#d8fdff" d="M2 7l5 1.500M2 10l5 1.500M2 13l5 1.500M2 16l5 1.500M2 19l5 1.500M14 14l3 1M14 17l3 1M14 20l3 1"></path></svg>`,
  remote: html`<svg class="glyph" width="24" height="26" viewBox="0 0 24 26" aria-hidden="true"><path fill="#cfd4de" d="M1 1l18 1 2 15-15 1z"></path><path fill="#1626c9" d="M3 3l15 1 1.500 11.500L7 16z"></path><path fill="#6f8df2" d="M11 3.500l7 .5 1.500 11.500z"></path><path fill="#b9bec8" d="M9 18h5l2 5-9 1-2-2 4-1z"></path><circle cx="18" cy="19.500" r="5.500" fill="#e8e8e8"></circle><path fill="none" stroke="#2d8a3c" stroke-width="1.400" d="M15 18.500l2.500 1.500L16 22.500M21 16.500l-2.500 2 2.500 2"></path></svg>`,
  notepad: html`<svg class="glyph" width="24" height="24" viewBox="0 0 24 24" aria-hidden="true"><path fill="#e9eef0" d="M8 1h14l1 18-3 4z"></path><path fill="#b07a2c" d="M21 4l2 15-3 4z"></path><path fill="#4ba6b6" d="M7 1h14l-4 21-16-3z"></path><path fill="#a8dfe8" d="M7 1h14l-2 9-14-1z"></path></svg>`,
};

@customElement("windows-taskbar")
class WindowsTaskbar extends LitElement {
  static styles = [base, css`
    :host { display: flex; height: 40px; flex: none; background: linear-gradient(90deg, #223a42 0%, #213840 38%, #20313f 52%, #1c2b47 72%, #1a2847 100%); color: #fff; font-family: "Open Sans", "Noto Sans", sans-serif; font-size: 12px; }
    button { height: 40px; position: relative; }
    .sys { display: flex; }
    .sys button, .apps button { width: 48px; }
    .apps { display: flex; gap: 1px; padding-left: 3px; }
    .running::after { content: ""; position: absolute; bottom: 0; left: 4px; width: 40px; height: 2px; background: linear-gradient(90deg, #76b9ed 32px, #4c7fa8 32px); }
    .apps .current { background: #4c6068; }
    .current::after { content: ""; position: absolute; inset: auto 0 0; height: 2px; background: #76b9ed; }
    .tray { margin-left: auto; display: flex; align-items: center; }
    .tray button { width: 24px; }
    .tray .chart { width: 40px; margin-right: 12px; }
    .tray .ink { width: 32px; background: #34425d; }
    .tray .lang { width: 36px; }
    .tray .clock { width: 70px; flex-direction: column; font-size: 11px; line-height: 18px; }
    .tray .notes { width: 50px; padding-right: 6px; border-right: 1px solid #6c778a; }
    .end { width: 3px; }
    .count { position: absolute; left: 19px; top: 19px; width: 16px; height: 16px; border-radius: 50%; border: 1px solid #a9adb3; background: #2d3238; font-size: 10px; line-height: 14px; text-align: center; }
  `];
  render() {
    const apps: [string, Art, string][] = [
      ["Edge", ICON.edge, ""], ["File Explorer", ICON.folder, "running"], ["Store", ICON.store, ""], ["Mail", ICON.mail, ""],
      ["Firefox", firefox(24), "current"], ["Server Manager", ICON.server, ""], ["Remote Desktop", ICON.remote, ""], ["Notepad", ICON.notepad, "running"],
    ];
    return html`
      <div class="sys"><button aria-label="Start">${ICON.windows}</button><button aria-label="Search">${ICON.search}</button><button aria-label="Task view">${ICON.view}</button></div>
      <div class="apps">${apps.map(([n, art, c]) => html`<button aria-label=${n} class=${c}>${art}</button>`)}</div>
      <div class="tray">
        <button class="chart" aria-label="Network monitor"><svg class="glyph" width="24" height="24" viewBox="0 0 24 24" aria-hidden="true"><path fill="#3fae2a" d="M1 20h3v3H1zM6 18h3.500v5H6zM12 16h3.500v7H12z"></path><path fill="#8be02a" d="M18 12h4v11h-4z"></path><path fill="#55c22c" d="M1 15C9 14 14 9 16.500 4.500L13 3.500 22.500 1v9.500L19.500 7C15 13 9 16 1 15z"></path></svg></button>
        <button aria-label="Hidden icons">${line("M2.500 11L8 5.500l5.500 5.500")}</button>
        <button aria-label="Camera">${line("M3.500 5h7v7h-7zM10.500 7.500l3-2v6l-3-2M4 2q3-1.500 6 0M4 15q3 1.500 6 0")}</button>
        <button aria-label="Network">${line("M5 3.500h10v7.500H5zM10 11v3M7 14h6M1 2h3.500v3H1zM2.800 5v7H5", 17, 1.1)}</button>
        <button aria-label="Volume">${line("M1 6h2.500L7 2.500v11L3.500 10H1zM9 6q1.500 2 0 4M11 4q3 4 0 8M13 2.500q4.500 5.500 0 11", 17, 1.1)}</button>
        <button class="ink" aria-label="Windows Ink Workspace">${line("M3 14c-2-3 3-7 4-4 .5 2-1.500 4-3.500 4M5 12l8-10.500 1.500 1L7 13M8 14c3-4 7-7 7-4.500 0 2-2.500.5-4 .5", 17, 1.1)}</button>
        <button class="lang">ENG</button>
        <button class="clock"><span>11:42</span><span>2023/04/28</span></button>
        <button class="notes" aria-label="Notifications"><svg class="glyph" width="18" height="18" viewBox="0 0 18 18" aria-hidden="true"><path fill="#fff" d="M1 1h16v12h-8l-4 4v-4H1z"></path><path stroke="#1a2847" d="M4 4.500h10M4 7h10M4 9.500h10"></path></svg><span class="count">1</span></button>
        <span class="end"></span>
      </div>`;
  }
}

@customElement("app-root")
class AppRoot extends LitElement {
  static styles = [base, css`
    :host { display: flex; flex-direction: column; height: 100vh; overflow: hidden; background: #1e1e1e; font-family: Roboto, sans-serif; position: relative; }
    .body { flex: 1; min-height: 0; display: flex; }
    .page { flex: 1; min-width: 0; display: flex; flex-direction: column; }
    .crumbs { display: flex; align-items: center; justify-content: space-between; height: 40px; flex: none; padding: 2px 4px 0 11px; background: #282828; color: #fff; font-size: 14px; border-bottom: 1px solid #242424; }
    .trail { display: flex; gap: 12px; font-size: 16px; }
    .trail a, .corp { color: #168dc4; }
    .trail .slash { font-size: 14px; line-height: 20px; margin-left: -4px; }
    .view { flex: 1; min-height: 0; display: grid; grid-template: minmax(0, 1fr) 17px / minmax(0, 1fr) 17px; }
    .scroll { overflow: hidden; padding: 16px 15px 0 16px; }
    .bar { display: flex; background: #1b1b1d; color: #77777a; }
    .bar svg { flex: none; }
    .vert { flex-direction: column; padding-top: 2px; }
    .track { flex: 1; display: flex; }
    .vert .track { flex-direction: column; }
    .thumb { background: #747476; }
    .vert .thumb { flex: 0 0 86%; }
    .horiz .thumb { flex: 1; margin-right: 10px; }
    .tip { position: absolute; right: 105px; bottom: 41px; height: 18px; padding: 0 6px; background: #959597; border: 1px solid #a2a2a4; box-shadow: 2px 2px 2px rgba(0, 0, 0, 0.4); color: #545456; font: 11px/16px "Open Sans", "Noto Sans", sans-serif; }
  `];
  private arrow(d: string) {
    return html`<svg width="17" height="17" viewBox="0 0 17 17" fill="none" stroke="currentColor" stroke-width="2" aria-hidden="true">${svg`<path d=${d}></path>`}</svg>`;
  }
  render() {
    return html`
      <browser-chrome></browser-chrome>
      <nas-header></nas-header>
      <div class="body">
        <nas-sidebar></nas-sidebar>
        <main class="page">
          <div class="crumbs">
            <nav class="trail"><a href="#storage">Storage</a><span class="slash">/</span><a href="#pools">Pools</a><span class="slash">/</span><a href="#acl">Edit ACL</a></nav>
            <div>TrueNAS CORE® © 2023 - <a class="corp" href="#ix">iXsystems, Inc</a>.</div>
          </div>
          <div class="view">
            <div class="scroll"><acl-form></acl-form></div>
            <div class="bar vert">${this.arrow("M5 10.500L8.500 7l3.500 3.500")}<div class="track"><div class="thumb"></div></div>${this.arrow("M5 7l3.500 3.500L12 7")}</div>
            <div class="bar horiz">${this.arrow("M10.500 5L7 8.500l3.500 3.500")}<div class="track"><div class="thumb"></div></div>${this.arrow("M7 5l3.500 3.500L7 12")}</div>
            <div class="bar"></div>
          </div>
        </main>
      </div>
      <windows-taskbar></windows-taskbar>
      <div class="tip" role="tooltip">Windows Ink Workspace</div>`;
  }
}
